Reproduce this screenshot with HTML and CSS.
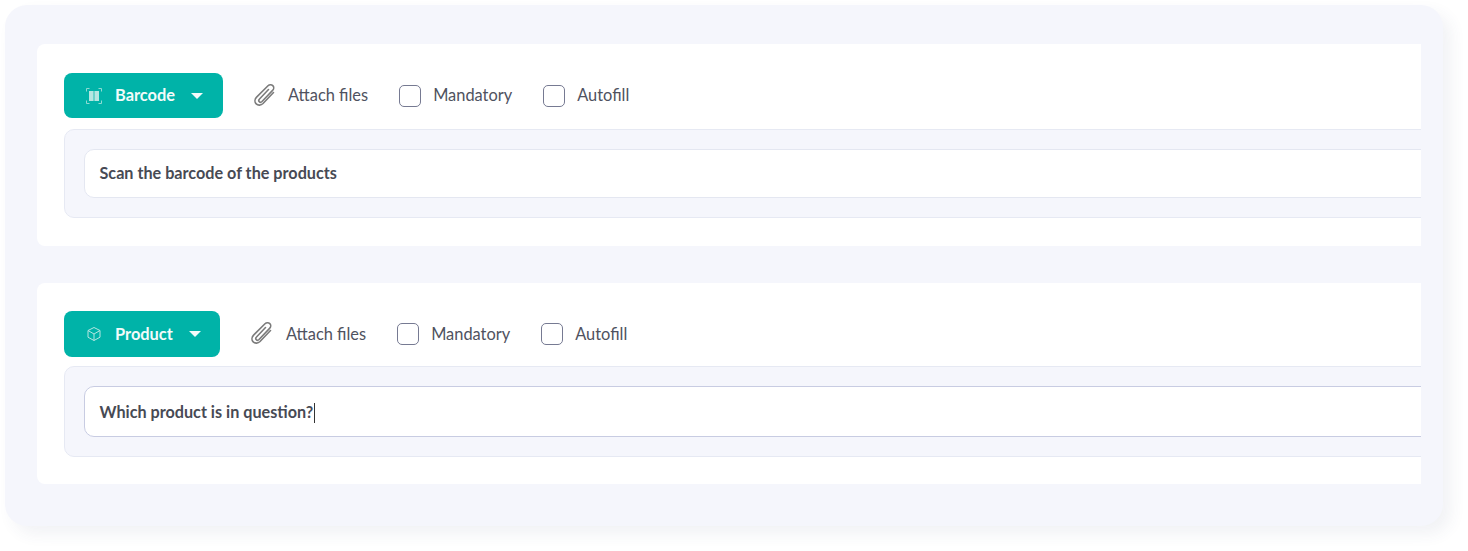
FILE: index.html
```html
<!DOCTYPE html>
<html lang="en">
<head>
<meta charset="utf-8">
<title>Form fields</title>
<link rel="stylesheet" href="styles.css">
</head>
<body>
<main class="panel">
  <section class="card card-first">
    <div class="toolbar toolbar-first">
      <button class="type-btn type-barcode" type="button">
        <svg class="type-icon" width="18" height="18" viewBox="0 0 18 18" fill="none" stroke="#8fdad3" stroke-width="1">
          <path d="M1.500 4.500V1.500H4.500M13.500 1.500H16.500V4.500M16.500 13.500V16.500H13.500M4.500 16.500H1.500V13.500"/>
          <rect x="4" y="4" width="4.600" height="10" fill="#b5e6e1" stroke="none"/>
          <rect x="9.400" y="4" width="4.600" height="10" fill="#b5e6e1" stroke="none"/>
        </svg>
        <span class="type-label">Barcode</span>
        <span class="caret"></span>
      </button>
      <span class="attach">
        <svg class="clip" width="26" height="26" viewBox="0 0 26 26" fill="none" stroke="#7b7b7b" stroke-width="1.600" stroke-linecap="round" stroke-linejoin="round">
          <path d="M21.500 9.500 11 20.500c-2 2-5 2.200-6.800.4s-1.500-4.800.4-6.800L16 2.800c1.400-1.400 3.500-1.500 4.800-.2s1.200 3.400-.2 4.800L10 18.500c-.8.800-2 .9-2.700.2s-.6-1.900.2-2.700l9-9.500"/>
        </svg>
        <span class="opt-text">Attach files</span>
      </span>
      <label class="opt"><span class="box"></span><span class="opt-text">Mandatory</span></label>
      <label class="opt"><span class="box"></span><span class="opt-text">Autofill</span></label>
    </div>
    <div class="question">
      <div class="field">Scan the barcode of the products</div>
    </div>
  </section>

  <section class="card card-second">
    <div class="toolbar toolbar-second">
      <button class="type-btn type-product" type="button">
        <svg class="type-icon" width="18" height="18" viewBox="0 0 18 18" fill="none" stroke="#b5e6e1" stroke-width="1" stroke-linejoin="round">
          <path d="M9 2.500 15 5.500V12.200L9 15.500 3 12.200V5.500Z"/>
          <path d="M3 5.500 9 9 15 5.500M9 9V15.500"/>
        </svg>
        <span class="type-label">Product</span>
        <span class="caret"></span>
      </button>
      <span class="attach">
        <svg class="clip" width="26" height="26" viewBox="0 0 26 26" fill="none" stroke="#7b7b7b" stroke-width="1.600" stroke-linecap="round" stroke-linejoin="round">
          <path d="M21.500 9.500 11 20.500c-2 2-5 2.200-6.800.4s-1.500-4.800.4-6.800L16 2.800c1.400-1.400 3.500-1.500 4.800-.2s1.200 3.400-.2 4.800L10 18.500c-.8.800-2 .9-2.700.2s-.6-1.900.2-2.700l9-9.500"/>
        </svg>
        <span class="opt-text">Attach files</span>
      </span>
      <label class="opt"><span class="box"></span><span class="opt-text">Mandatory</span></label>
      <label class="opt"><span class="box"></span><span class="opt-text">Autofill</span></label>
    </div>
    <div class="question question-active">
      <div class="field field-active">Which product is in question?<span class="cursor"></span></div>
    </div>
  </section>
</main>
</body>
</html>
```
FILE: styles.css
```css
* {
  box-sizing: border-box;
}

html,
body {
  margin: 0;
  height: 100%;
  background: #fff;
  overflow: hidden;
}

body {
  padding: 5px 25px 25px 5px;
  font-family: Lato, "Liberation Sans", sans-serif;
}

.panel {
  width: 1438px;
  height: 521px;
  padding: 39px 22px 0 32px;
  background: #f5f6fc;
  border-radius: 22px;
  box-shadow: 8px 8px 16px rgba(60, 70, 110, 0.07);
}

.card {
  background: #fff;
  border-radius: 8px 0 0 8px;
  overflow: hidden;
  padding-left: 27px;
}

.card-first {
  height: 202px;
  padding-top: 29px;
  margin-bottom: 37px;
}

.card-second {
  height: 201px;
  padding-top: 28px;
}

.toolbar {
  display: flex;
  align-items: center;
}

.toolbar-first {
  height: 45px;
  margin-bottom: 11px;
}

.toolbar-second {
  height: 46px;
  margin-bottom: 9px;
}

.toolbar-second .clip {
  margin-right: 11px;
}

.type-btn {
  display: flex;
  align-items: center;
  height: 100%;
  padding: 0 0 0 21px;
  border: 0;
  border-radius: 8px;
  background: #00b3a8;
  color: #f2fbfa;
  font: 700 16.400px Lato, "Liberation Sans", sans-serif;
}

.type-barcode {
  width: 159px;
}

.type-product {
  width: 156px;
}

.type-icon {
  flex: none;
}

.type-label {
  margin-left: 12px;
  margin-bottom: 2px;
}

.caret {
  width: 0;
  height: 0;
  margin-left: 16px;
  border-left: 6px solid transparent;
  border-right: 6px solid transparent;
  border-top: 6px solid #f2fbfa;
}

.attach {
  display: flex;
  align-items: center;
  margin-left: 29px;
}

.clip {
  flex: none;
  margin-right: 10px;
}

.opt {
  display: flex;
  align-items: center;
  margin-left: 31px;
}

.box {
  width: 22px;
  height: 22px;
  margin-right: 12px;
  background: #fff;
  border: 1px solid #767a92;
  border-radius: 5px;
}

.opt-text {
  margin-bottom: 2px;
  color: #4f5260;
  font-size: 16.400px;
  white-space: nowrap;
}

.question {
  width: 1500px;
  height: 89px;
  padding: 19px 0 0 19px;
  background: #f5f6fc;
  border: 1px solid #e6e9f3;
  border-radius: 10px;
}

.question-active {
  height: 91px;
}

.field {
  height: 49px;
  padding-left: 14.500px;
  background: #fff;
  border: 1px solid #e4e7f1;
  border-radius: 10px;
  color: #474a54;
  font-size: 16.200px;
  font-weight: 700;
  line-height: 45px;
}

.field-active {
  height: 51px;
  border-color: #c8cce2;
  line-height: 49px;
}

.cursor {
  display: inline-block;
  width: 1px;
  height: 20px;
  margin-left: 1px;
  background: #333;
  vertical-align: -5px;
}
```
